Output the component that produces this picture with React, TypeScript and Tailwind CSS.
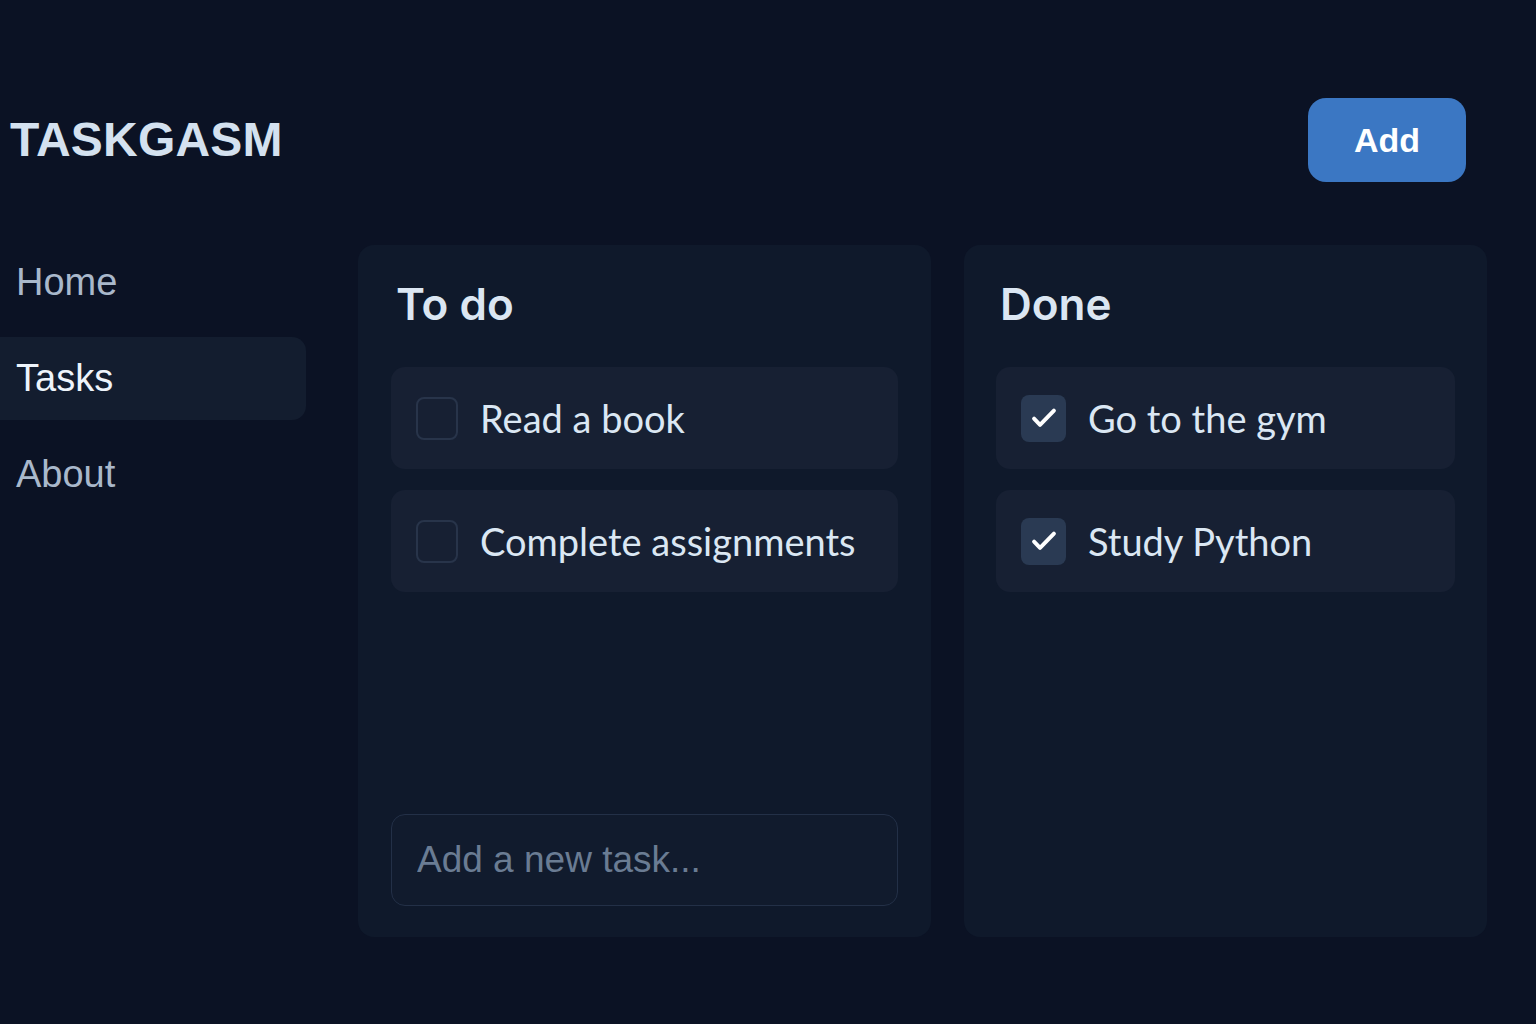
import { useState } from "react"

type Task = { id: number; title: string; done: boolean }

const initialTasks: Task[] = [
  { id: 1, title: "Read a book", done: false },
  { id: 2, title: "Complete assignments", done: false },
  { id: 3, title: "Go to the gym", done: true },
  { id: 4, title: "Study Python", done: true },
]

const navItems = ["Home", "Tasks", "About"]

function CheckBox({ checked }: { checked: boolean }) {
  if (!checked) {
    return <div className="w-[42px] h-[43px] shrink-0 rounded-[8px] border-2 border-[#28344a]" />
  }
  return (
    <div className="w-[45px] h-[47px] shrink-0 rounded-[8px] bg-[#2a3a53] flex items-center justify-center">
      <svg width="34" height="34" viewBox="0 0 24 24" fill="none">
        <path d="M5 12.5l4.2 4.3L19 6.8" stroke="#ffffff" strokeWidth="2.8" strokeLinecap="round" strokeLinejoin="round" />
      </svg>
    </div>
  )
}

function TaskRow({ task }: { task: Task }) {
  return (
    <div className="h-[102px] rounded-[14px] bg-[#172033] flex items-center gap-[22px] pl-[25px]">
      <CheckBox checked={task.done} />
      <span className="text-[38px] text-[#dbe7f3] font-['Lato',sans-serif]">{task.title}</span>
    </div>
  )
}

export default function App() {
  const [tasks] = useState(initialTasks)
  const todo = tasks.filter((t) => !t.done)
  const done = tasks.filter((t) => t.done)

  return (
    <div className="w-full h-screen overflow-hidden bg-[#0b1224] font-['Liberation_Sans',sans-serif]">
      {/* header */}
      <header className="flex items-center justify-between pl-[10px] pr-[70px] pt-[98px]">
        <h1 className="text-[48px] font-bold text-[#d4e1ef] tracking-[0.2px]">TASKGASM</h1>
        <button className="w-[158px] h-[84px] rounded-[18px] bg-[#3b77c3] text-white text-[34px] font-bold">
          Add
        </button>
      </header>

      <div className="flex mt-[59px]">
        {/* sidebar */}
        <nav className="w-[306px] shrink-0 flex flex-col gap-[13px]">
          {navItems.map((item) => (
            <div
              key={item}
              className={`h-[83px] flex items-center rounded-r-[14px] pl-[16px] text-[38px] ${
                item === "Tasks" ? "bg-[#131d2f] text-[#eef4fb]" : "text-[#a9b8cb]"
              }`}
            >
              {item}
            </div>
          ))}
        </nav>

        {/* board */}
        <div className="flex gap-[33px] ml-[52px] mt-[4px]">
          <section className="w-[573px] h-[692px] rounded-[16px] bg-[#0f192b] px-[33px] pt-[37px] pb-[31px] flex flex-col">
            <h2 className="text-[44px] leading-none font-semibold text-[#dbe6f2] font-['Inter',sans-serif] pl-[5px] mb-[41px]">
              To do
            </h2>
            <div className="flex flex-col gap-[21px]">
              {todo.map((t) => (
                <TaskRow key={t.id} task={t} />
              ))}
            </div>
            <input
              placeholder="Add a new task..."
              className="mt-auto h-[92px] w-full rounded-[14px] border border-[#233047] bg-[#111b2d] px-[25px] text-[37px] text-[#dbe7f3] placeholder:text-[#6a7c93] outline-none font-['Liberation_Sans',sans-serif]"
            />
          </section>

          <section className="w-[523px] h-[692px] rounded-[16px] bg-[#0f192b] px-[32px] pt-[37px] flex flex-col">
            <h2 className="text-[44px] leading-none font-semibold text-[#dbe6f2] font-['Inter',sans-serif] pl-[4px] mb-[41px]">
              Done
            </h2>
            <div className="flex flex-col gap-[21px]">
              {done.map((t) => (
                <TaskRow key={t.id} task={t} />
              ))}
            </div>
          </section>
        </div>
      </div>
    </div>
  )
}
